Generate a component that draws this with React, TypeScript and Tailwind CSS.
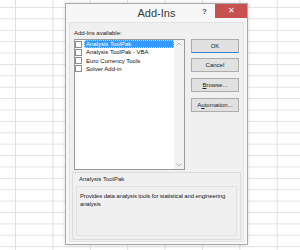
export default function App() {
  const addins = [
    "Analysis ToolPak",
    "Analysis ToolPak - VBA",
    "Euro Currency Tools",
    "Solver Add-in",
  ];

  const font = "font-['Liberation_Sans',Arial,sans-serif]";

  return (
    <div
      className={`relative w-[300px] h-[250px] overflow-hidden bg-white bg-[linear-gradient(to_right,#e0e0e0_1px,transparent_1px),linear-gradient(to_bottom,#e2e2e2_1px,transparent_1px)] bg-[size:37.4px_11.4px] bg-[position:15px_7px] ${font}`}
    >
      {/* DIALOG */}
      <div className="absolute left-[65px] top-[3px] w-[183px] h-[242px] flex flex-col border border-[#a9a9a9] bg-[#f7f7f7] shadow-[0_0_4px_rgba(0,0,0,0.15)]">
        {/* TITLE BAR */}
        <div className="grid grid-cols-[1fr_auto_1fr] h-[18px] shrink-0">
          <div />
          <div className="pt-[3px] text-[11px] leading-[12px] text-[#3a3a3a]">
            Add-Ins
          </div>
          <div className="flex justify-end items-start">
            <div className="mr-[8px] pt-[3px] text-[8px] leading-[9px] text-[#555] font-bold">
              ?
            </div>
            <div className="w-[32px] h-[14px] bg-[#c75050] flex items-center justify-center text-white text-[8px] leading-none">
              ✕
            </div>
          </div>
        </div>

        {/* BODY */}
        <div className="flex-1 mx-[3px] mb-[2px] border border-[#e4e4e4] bg-[#f0f0f0] flex flex-col px-[4px] pt-[6px]">
          <div className="text-[6px] leading-[8px] h-[10px] text-[#222]">
            Add-Ins available:
          </div>

          <div className="flex">
            {/* LIST */}
            <div className="w-[113px] h-[131px] border border-[#9a9a9a] bg-white flex">
              <div className="flex-1 flex flex-col">
                {addins.map((name, i) => (
                  <div key={name} className="flex items-center h-[8px] mb-[0.3px]">
                    <div className="w-[7px] h-[7px] border border-[#8c8c8c] bg-white mr-[2px] shrink-0" />
                    {i === 0 ? (
                      <div className="flex-1 h-[8px] bg-[#3399ff] text-white text-[6px] leading-[8px] pl-[1px] border border-dotted border-[#cfe6ff]">
                        <span className="relative -top-[1px]">{name}</span>
                      </div>
                    ) : (
                      <div className="flex-1 h-[8px] text-[#111] text-[6px] leading-[8px] pl-[2px]">
                        {name}
                      </div>
                    )}
                  </div>
                ))}
              </div>
              {/* SCROLLBAR */}
              <div className="w-[10px] bg-[#f2f2f2] flex flex-col items-center justify-between py-[2px]">
                <svg width="6" height="4" viewBox="0 0 6 4">
                  <path d="M0.5 3.5 L3 1 L5.5 3.5" fill="none" stroke="#a5a5a5" strokeWidth="0.8" />
                </svg>
                <svg width="6" height="4" viewBox="0 0 6 4">
                  <path d="M0.5 0.5 L3 3 L5.5 0.5" fill="none" stroke="#a5a5a5" strokeWidth="0.8" />
                </svg>
              </div>
            </div>

            {/* BUTTONS */}
            <div className="ml-[6px] w-[49px] flex flex-col gap-[5px] text-[6px] text-[#222]">
              <div className="h-[14px] border border-[#adadad] border-b-[#3c7fd1] border-b-dotted bg-[#e1e1e1] flex items-center justify-center">
                OK
              </div>
              <div className="h-[14px] border border-[#adadad] bg-[#e1e1e1] flex items-center justify-center">
                Cancel
              </div>
              <div className="mt-[1px] h-[14px] border border-[#adadad] bg-[#e1e1e1] flex items-center justify-center">
                <span>
                  <span className="underline">B</span>rowse...
                </span>
              </div>
              <div className="mt-[1px] h-[14px] border border-[#adadad] bg-[#e1e1e1] flex items-center justify-center">
                <span>
                  A<span className="underline">u</span>tomation...
                </span>
              </div>
            </div>
          </div>

          {/* DESCRIPTION GROUP */}
          <div className="mt-[2px] -mx-[2px] mb-[1px] flex-1 border border-[#dcdcdc] flex flex-col px-[3px] pt-[2px] pb-[3px]">
            <div className="text-[6px] leading-[8px] h-[11px] pl-[3px] text-[#222]">
              Analysis ToolPak
            </div>
            <div className="flex-1 border border-[#e2e2e2] pl-[3px] pr-[1px] pt-[5px] text-[6px] leading-[8px] tracking-[-0.15px] text-[#222]">
              Provides data analysis tools for statistical and engineering
              analysis
            </div>
          </div>
        </div>
      </div>
    </div>
  );
}
